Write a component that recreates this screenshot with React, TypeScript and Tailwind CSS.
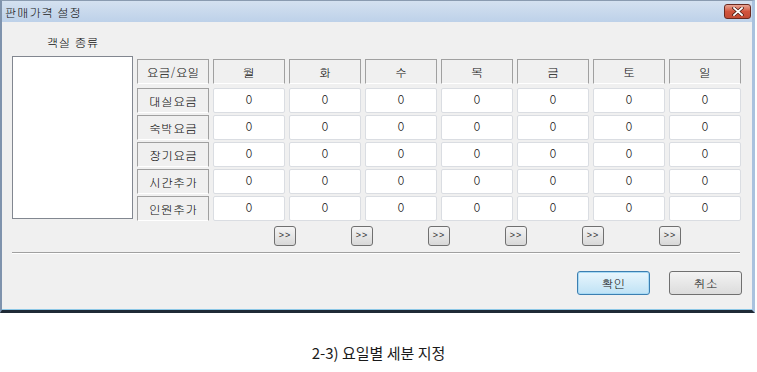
import React from "react"

const days = ["월", "화", "수", "목", "금", "토", "일"]
const rows = ["대실요금", "숙박요금", "장기요금", "시간추가", "인원추가"]

const ui = "font-['Gulim','Dotum','Noto_Sans_CJK_KR',sans-serif]"

function LabelCell({ text }: { text: string }) {
  return (
    <div className="h-[25px] bg-[#f0f0f0] border border-[#a0a0a0] border-b-white flex items-center justify-center text-[12px] text-[#111]">
      {text}
    </div>
  )
}

function ValueCell() {
  return (
    <div className="h-[25px] bg-white border border-[#dadde2] rounded-[2px] flex justify-center pt-[3px] text-[12px] leading-[14px] text-[#111]">
      0
    </div>
  )
}

function CloseButton() {
  return (
    <div className="w-[27px] h-[15px] rounded-[3px] border border-[#6b2a20] bg-gradient-to-b from-[#e8a594] via-[#d1543d] to-[#c24b35] flex items-center justify-center">
      <svg width="12" height="9" viewBox="0 0 12 9">
        <path d="M2 1 L10 8 M10 1 L2 8" stroke="#4a1a12" strokeWidth="3.2" strokeLinecap="square" />
        <path d="M2 1 L10 8 M10 1 L2 8" stroke="#ffffff" strokeWidth="1.8" strokeLinecap="square" />
      </svg>
    </div>
  )
}

export default function App() {
  return (
    <div className={`w-[757px] h-[372px] bg-white flex flex-col ${ui}`}>
      {/* dialog window */}
      <div className="w-[755px] h-[313px] flex flex-col border-l-2 border-r-[3px] border-b-[3px] border-l-[#7f93ad] border-r-[#a9c2de] border-b-[#1f2a36] border-t border-t-[#8a9bb0]">
        <div className="h-[21px] shrink-0 bg-gradient-to-b from-[#d4e1f0] to-[#bdd1e9] flex items-center justify-between pl-[3px] pr-[1px]">
          <span className="text-[12px] text-[#1b1b1b]">판매가격 설정</span>
          <CloseButton />
        </div>

        <div className="flex-1 bg-[#f0f0f0] flex flex-col pl-[10px] pr-[10px] pt-[13px] border-b border-b-[#8cc7e6]">
          <div className="flex gap-[4px]">
            <div className="w-[121px] flex flex-col items-center">
              <div className="h-[14px] leading-[14px] text-[12px] text-[#111]">객실 종류</div>
              <div className="mt-[7px] w-[121px] h-[163px] bg-white border border-[#828790]" />
            </div>

            <div className="mt-[24px] flex flex-col">
              <div className="grid grid-cols-[72px_repeat(7,72px)] gap-x-[4px]">
                <LabelCell text="요금/요일" />
                {days.map((d) => (
                  <LabelCell key={d} text={d} />
                ))}
              </div>
              <div className="mt-[4px] flex flex-col gap-[2px]">
                {rows.map((r) => (
                  <div key={r} className="grid grid-cols-[72px_repeat(7,72px)] gap-x-[4px]">
                    <LabelCell text={r} />
                    {days.map((d) => (
                      <ValueCell key={d} />
                    ))}
                  </div>
                ))}
              </div>
            </div>
          </div>

          <div className="mt-[5px] ml-[262px] flex gap-[55px]">
            {days.slice(1).map((d) => (
              <div
                key={d}
                className="w-[22px] h-[20px] rounded-[3px] border border-[#707070] bg-gradient-to-b from-[#f4f4f4] to-[#d8d8d8] flex items-center justify-center text-[9px] tracking-[1px] text-[#333] font-['Liberation_Sans',sans-serif]"
              >
                &gt;&gt;
              </div>
            ))}
          </div>

          <div className="mt-[6px] mr-[2px] h-[2px] border-t border-t-[#a0a0a0] border-b border-b-white" />

          <div className="mt-[17px] flex justify-end gap-[19px]">
            <div className="w-[73px] h-[24px] rounded-[3px] border border-[#3c7fb1] bg-gradient-to-b from-[#e9f6fd] to-[#bfe2f5] shadow-[inset_0_0_0_1px_#a8daf5] flex items-center justify-center text-[12px] text-[#111]">
              확인
            </div>
            <div className="w-[73px] h-[24px] rounded-[3px] border border-[#707070] bg-gradient-to-b from-[#f3f3f3] to-[#dcdcdc] flex items-center justify-center text-[12px] text-[#111]">
              취소
            </div>
          </div>
        </div>
      </div>

      <div className="pt-[31px] text-center text-[15px] leading-[18px] text-[#1a1a1a] font-['Noto_Sans_CJK_KR',sans-serif]">
        2-3) 요일별 세분 지정
      </div>
    </div>
  )
}
